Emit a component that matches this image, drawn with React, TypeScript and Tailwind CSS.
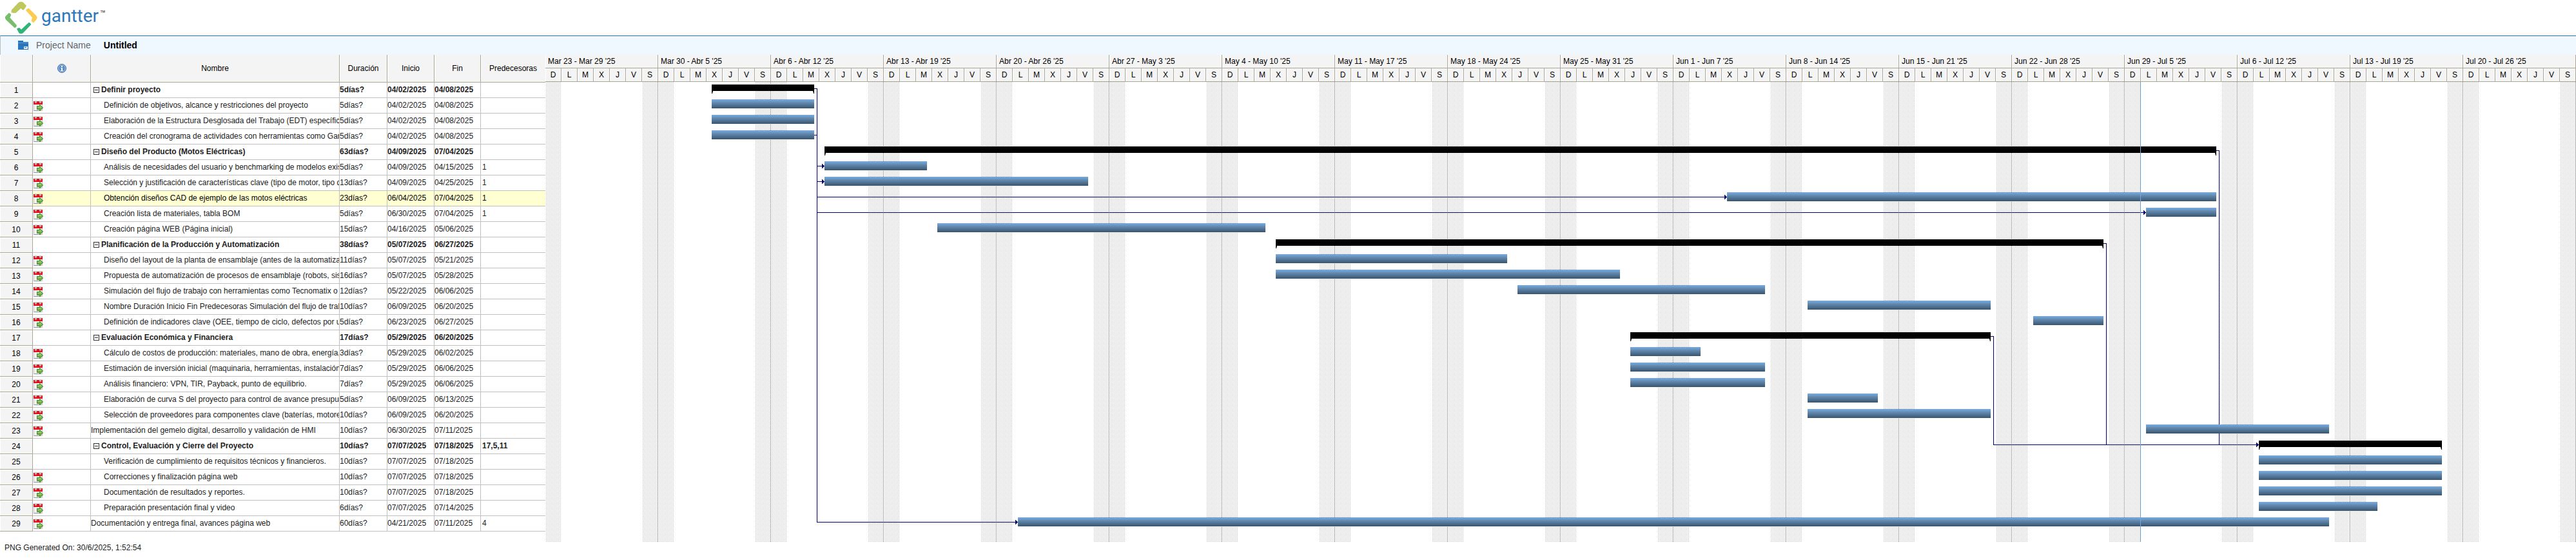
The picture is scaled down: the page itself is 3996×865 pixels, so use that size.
import React from "react";

type Task = {
  name: string;
  level: 0 | 1;
  summary?: boolean;
  constraint?: boolean;
  days: number;
  start: string;
  end: string;
  pred?: string;
};

const s = (name: string, days: number, start: string, end: string, pred?: string): Task => ({
  name, level: 0, summary: true, days, start, end, pred,
});
const t = (name: string, days: number, start: string, end: string, pred?: string): Task => ({
  name, level: 1, constraint: true, days, start, end, pred,
});

const tasks: Task[] = [
  s("Definir proyecto", 5, "04/02/2025", "04/08/2025"),
  t("Definición de objetivos, alcance y restricciones del proyecto", 5, "04/02/2025", "04/08/2025"),
  t("Elaboración de la Estructura Desglosada del Trabajo (EDT) específica", 5, "04/02/2025", "04/08/2025"),
  t("Creación del cronograma de actividades con herramientas como Gantter", 5, "04/02/2025", "04/08/2025"),
  s("Diseño del Producto (Motos Eléctricas)", 63, "04/09/2025", "07/04/2025"),
  t("Análisis de necesidades del usuario y benchmarking de modelos existentes", 5, "04/09/2025", "04/15/2025", "1"),
  t("Selección y justificación de características clave (tipo de motor, tipo de", 13, "04/09/2025", "04/25/2025", "1"),
  t("Obtención diseños CAD de ejemplo de las motos eléctricas", 23, "06/04/2025", "07/04/2025", "1"),
  t("Creación lista de materiales, tabla BOM", 5, "06/30/2025", "07/04/2025", "1"),
  t("Creación página WEB (Página inicial)", 15, "04/16/2025", "05/06/2025"),
  s("Planificación de la Producción y Automatización", 38, "05/07/2025", "06/27/2025"),
  t("Diseño del layout de la planta de ensamblaje (antes de la automatización)", 11, "05/07/2025", "05/21/2025"),
  t("Propuesta de automatización de procesos de ensamblaje (robots, sistemas", 16, "05/07/2025", "05/28/2025"),
  t("Simulación del flujo de trabajo con herramientas como Tecnomatix o", 12, "05/22/2025", "06/06/2025"),
  t("Nombre Duración Inicio Fin Predecesoras Simulación del flujo de trabajo", 10, "06/09/2025", "06/20/2025"),
  t("Definición de indicadores clave (OEE, tiempo de ciclo, defectos por unidad", 5, "06/23/2025", "06/27/2025"),
  s("Evaluación Económica y Financiera", 17, "05/29/2025", "06/20/2025"),
  t("Cálculo de costos de producción: materiales, mano de obra, energía,", 3, "05/29/2025", "06/02/2025"),
  t("Estimación de inversión inicial (maquinaria, herramientas, instalación", 7, "05/29/2025", "06/06/2025"),
  t("Análisis financiero: VPN, TIR, Payback, punto de equilibrio.", 7, "05/29/2025", "06/06/2025"),
  t("Elaboración de curva S del proyecto para control de avance presupuestal", 5, "06/09/2025", "06/13/2025"),
  t("Selección de proveedores para componentes clave (baterías, motores", 10, "06/09/2025", "06/20/2025"),
  { ...t("Implementación del gemelo digital, desarrollo y validación de HMI", 10, "06/30/2025", "07/11/2025"), level: 0 },
  s("Control, Evaluación y Cierre del Proyecto", 10, "07/07/2025", "07/18/2025", "17,5,11"),
  { ...t("Verificación de cumplimiento de requisitos técnicos y financieros.", 10, "07/07/2025", "07/18/2025"), constraint: false },
  t("Correcciones y finalización página web", 10, "07/07/2025", "07/18/2025"),
  t("Documentación de resultados y reportes.", 10, "07/07/2025", "07/18/2025"),
  t("Preparación presentación final y video", 6, "07/07/2025", "07/14/2025"),
  { ...t("Documentación y entrega final, avances página web", 60, "04/21/2025", "07/11/2025", "4"), level: 0 },
];

const SELECTED = 8;
const DAY = 25;
const WEEKS = [
  "Mar 23 - Mar 29 '25", "Mar 30 - Abr 5 '25", "Abr 6 - Abr 12 '25", "Abr 13 - Abr 19 '25",
  "Abr 20 - Abr 26 '25", "Abr 27 - May 3 '25", "May 4 - May 10 '25", "May 11 - May 17 '25",
  "May 18 - May 24 '25", "May 25 - May 31 '25", "Jun 1 - Jun 7 '25", "Jun 8 - Jun 14 '25",
  "Jun 15 - Jun 21 '25", "Jun 22 - Jun 28 '25", "Jun 29 - Jul 5 '25", "Jul 6 - Jul 12 '25",
  "Jul 13 - Jul 19 '25", "Jul 20 - Jul 26 '25",
];
const DAYS = ["D", "L", "M", "X", "J", "V", "S"];
const SPAN = WEEKS.length * 7 * DAY;
const BODY = 713;

const dayIndex = (date: string) => {
  const [m, d, y] = date.split("/").map(Number);
  return Math.round((Date.UTC(y, m - 1, d) - Date.UTC(2025, 2, 23)) / 86400000);
};
const startX = (task: Task) => dayIndex(task.start) * DAY + 8;
const endX = (task: Task) => dayIndex(task.end) * DAY + 17;
const pct = (x: number) => `${(x / SPAN) * 100}%`;
const lineY = (row: number) => 1 + (row - 1) * 24 + 9;

const LINKS: [number, number][] = [[1, 6], [1, 7], [1, 8], [1, 9], [4, 29], [17, 24], [11, 24], [5, 24]];

function Logo() {
  return (
    <svg width="52" height="52" viewBox="21 6 156 156" aria-hidden="true">
      <path d="M54 46 L86 12 Q97 4 109 12 L123 27 Q118 38 108 48 L97 39 L74 60 Q60 62 52 57 Z" fill="#bfc85c" />
      <path d="M120 48 Q124 40 134 38 L168 72 Q176 82 170 90 L156 106 Q147 102 146 96 L150 82 Z" fill="#fccb50" />
      <path d="M78 134 Q84 129 90 129 L99 137 L134 104 Q143 106 145 114 L108 153 Q98 161 88 153 Z" fill="#31b477" />
      <path d="M41 60 Q50 62 52 70 L46 82 L78 118 Q77 128 68 130 L28 92 Q20 82 26 76 Z" fill="#77bd6c" />
    </svg>
  );
}

function FolderIcon() {
  return (
    <svg width="16" height="14" viewBox="0 0 16 14" aria-hidden="true">
      <path d="M0 0h8v2h8v12H0z" fill="#2a76bd" />
      <path d="M0 3.5h16" stroke="#5d9ad0" strokeWidth="1" />
      <path d="M9 9h6v4H9z" fill="#e8f2fb" />
      <path d="M10 10.5h3" stroke="#2a76bd" strokeWidth="1" />
    </svg>
  );
}

function InfoIcon() {
  return (
    <svg width="14" height="14" viewBox="0 0 14 14" className="mx-auto block" role="img" aria-label="Información">
      <circle cx="7" cy="7" r="6.5" fill="#5e8dc9" stroke="#4670ab" />
      <circle cx="7" cy="7" r="5.3" fill="none" stroke="#a9c6e8" />
      <path d="M6 3h2v2H6zM5.4 6H8v4h.8v1H5.2v-1H6V7h-.6z" fill="#fff" />
    </svg>
  );
}

function CalendarIcon() {
  return (
    <svg width="16" height="16" viewBox="0 0 16 16" className="block" aria-hidden="true">
      <path d="M.5 5h13v10.5H.5z" fill="#f4f4f4" stroke="#c4c4c4" />
      <path d="M.5 15.5h11" stroke="#8d8d8d" />
      <path d="M0 1h14v5H0z" fill="#e0121b" />
      <path d="M2 0h3v3.5H2zM9 0h3v3.5H9z" fill="#d5d5d5" />
      <path d="M3 1h1v2H3zM10 1h1v2h-1z" fill="#8f8f8f" />
      <path d="M5.5 8.5h4V6.3l5.3 4.7-5.3 4.7v-2.2h-4z" fill="#6db33f" stroke="#3f7d22" strokeWidth=".9" />
      <path d="M6.5 9.6h4V8.5l2.3 2.2H6.5z" fill="#a6d885" />
    </svg>
  );
}

function Bar({ task }: { task: Task }) {
  const style = { marginLeft: pct(startX(task)), width: pct(endX(task) - startX(task)) };
  if (!task.summary) {
    return (
      <div className="h-6 pt-0.5">
        <div className="h-3.5 bg-linear-to-b from-[#7aabdd] to-[#3b556d]" style={style} />
      </div>
    );
  }
  return (
    <div className="h-6 pt-[3px]">
      <div style={style}>
        <div className="h-2.5 bg-black" />
        <div className="flex justify-between">
          <svg width="2" height="4" viewBox="0 0 2 4"><path d="M0 0h2L1 4H0z" /></svg>
          <svg width="2" height="4" viewBox="0 0 2 4"><path d="M2 0H0l1 4h1z" /></svg>
        </div>
      </div>
    </div>
  );
}

function ChartBackdrop() {
  const weekends = WEEKS.flatMap((_, w) => [w * 7, w * 7 + 6]);
  return (
    <svg
      className="absolute inset-0 h-full w-full"
      viewBox={`0 0 ${SPAN} ${BODY}`}
      preserveAspectRatio="none"
      shapeRendering="crispEdges"
      aria-hidden="true"
    >
      <defs>
        <pattern id="dots" width="2" height="2" patternUnits="userSpaceOnUse">
          <rect x="1" y="0" width="1" height="1" fill="#c0c0c0" />
        </pattern>
      </defs>
      {weekends.map((d) => (
        <g key={d} transform={`translate(${d * DAY} 0)`}>
          <rect x="1" y="0" width="24" height={BODY} fill="url(#dots)" />
        </g>
      ))}
      {WEEKS.map((w, i) => (
        <line
          key={w}
          x1={(i + 1) * 7 * DAY - 0.5}
          x2={(i + 1) * 7 * DAY - 0.5}
          y1="0"
          y2={BODY}
          stroke="#808080"
          strokeDasharray="1 1"
        />
      ))}
      {LINKS.map(([from, to]) => {
        const x0 = endX(tasks[from - 1]);
        const x1 = startX(tasks[to - 1]);
        const y0 = lineY(from) + 0.5;
        const y1 = lineY(to) + 0.5;
        return (
          <g key={`${from}-${to}`}>
            <path d={`M${x0} ${y0}H${x0 + 4.5}V${y1}H${x1}`} fill="none" stroke="#000080" />
            <path
              d={`M${x1 - 4} ${y1 - 3.5}h1v1h1v1h1v1h1v1h-1v1h-1v1h-1v1h-1z`}
              fill="#000080"
            />
          </g>
        );
      })}
    </svg>
  );
}

const headCell = "border-r border-b border-[#aca899] bg-[#f4f4f4] p-0 text-center font-normal shadow-[inset_1px_0_0_#fff]";
const cell = "h-6 overflow-hidden border-r border-b border-[#c0c0c0] p-0 pb-px whitespace-nowrap";
const lastCell = "h-6 overflow-hidden border-b border-[#c0c0c0] p-0 pb-px pl-0.5 whitespace-nowrap";

function TaskTable() {
  return (
    <table className="w-[846px] shrink-0 table-fixed border-separate border-spacing-0 self-start">
      <colgroup>
        <col className="w-[51px]" />
        <col className="w-[90px]" />
        <col className="w-[386px]" />
        <col className="w-[74px]" />
        <col className="w-[73px]" />
        <col className="w-[72px]" />
        <col className="w-[100px]" />
      </colgroup>
      <thead>
        <tr className="h-[43px]">
          <th scope="col" className={headCell} />
          <th scope="col" className={headCell}><InfoIcon /></th>
          <th scope="col" className={headCell}>Nombre</th>
          <th scope="col" className={headCell}>Duración</th>
          <th scope="col" className={headCell}>Inicio</th>
          <th scope="col" className={headCell}>Fin</th>
          <th scope="col" className="border-b border-[#aca899] bg-[#f4f4f4] p-0 text-center font-normal shadow-[inset_1px_0_0_#fff]">
            Predecesoras
          </th>
        </tr>
      </thead>
      <tbody>
        {tasks.map((task, i) => {
          const tone = i + 1 === SELECTED ? "bg-[#ffffd2] text-black" : "text-[#222]";
          return (
            <tr key={task.name} className={task.summary ? `${tone} font-bold` : tone}>
              <th scope="row" className="h-6 border-r border-b border-[#aca899] bg-[#f4f4f4] p-0 pt-px text-center font-normal text-black shadow-[inset_1px_1px_0_#fff]">
                {i + 1}
              </th>
              <td className="h-6 border-r border-b border-[#c0c0c0] p-0 pt-px pl-px">
                {task.constraint && <CalendarIcon />}
              </td>
              <td className={cell}>
                {task.summary ? (
                  <div className="flex items-center gap-[3px] pl-1">
                    <button type="button" aria-label="Contraer" className="mt-px block h-[9px] w-[9px]">
                      <svg width="9" height="9" viewBox="0 0 9 9" className="block" shapeRendering="crispEdges">
                        <path d="M.5 .5h8v8h-8zM2 4.5h5" fill="none" stroke="#333" />
                      </svg>
                    </button>
                    <span>{task.name}</span>
                  </div>
                ) : (
                  <span className={task.level === 1 ? "pl-5" : ""}>{task.name}</span>
                )}
              </td>
              <td className={cell}>{task.days}días?</td>
              <td className={cell}>{task.start}</td>
              <td className={cell}>{task.end}</td>
              <td className={lastCell}>{task.pred}</td>
            </tr>
          );
        })}
      </tbody>
    </table>
  );
}

function Chart() {
  return (
    <div className="min-w-0 flex-1">
      <div className="flex bg-[#f4f4f4]">
        {WEEKS.map((week) => (
          <div key={week} className="min-w-0 flex-1">
            <div className="h-[21px] overflow-hidden border-r border-b border-[#aca899] pl-1 leading-5 whitespace-nowrap shadow-[inset_1px_0_0_#fff]">
              {week}
            </div>
            <div className="grid grid-cols-7">
              {DAYS.map((d) => (
                <div key={d} className="h-[21px] border-r border-b border-[#aca899] text-center leading-5 shadow-[inset_1px_0_0_#fff]">
                  {d}
                </div>
              ))}
            </div>
          </div>
        ))}
      </div>
      <div className="relative">
        <ChartBackdrop />
        <div className="relative pt-px pb-4">
          {tasks.map((task) => (
            <Bar key={task.name} task={task} />
          ))}
        </div>
        <div className="absolute inset-y-0 -ml-px w-px bg-[#73a9dc]" style={{ left: pct(99 * DAY) }} />
      </div>
    </div>
  );
}

export default function App() {
  return (
    <div className="min-h-screen bg-white font-['Liberation_Sans',Arial,sans-serif] text-[12px] leading-4 text-black">
      <header className="flex h-[55px] items-start gap-1 pt-0.5 pl-[7px]">
        <Logo />
        <div className="flex items-start gap-0.5 pt-[7px] pl-px font-[Roboto,sans-serif] text-[#2b78bd]">
          <span className="text-[28px] leading-8">gantter</span>
          <span className="pt-1 text-[14px] leading-4 text-[#444]">™</span>
        </div>
      </header>
      <div className="flex h-[30px] items-center gap-3 border-t border-l border-t-[#2b78b4] border-l-[#c0c0c0] bg-[#eff7ff] pb-0.5 pl-[27px] text-[14px]">
        <FolderIcon />
        <span className="text-[#666]">Project Name</span>
        <strong className="pl-2">Untitled</strong>
      </div>
      <main className="flex">
        <TaskTable />
        <Chart />
      </main>
      <footer className="pt-px pl-[7px] text-[#222]">PNG Generated On: 30/6/2025, 1:52:54</footer>
    </div>
  );
}
